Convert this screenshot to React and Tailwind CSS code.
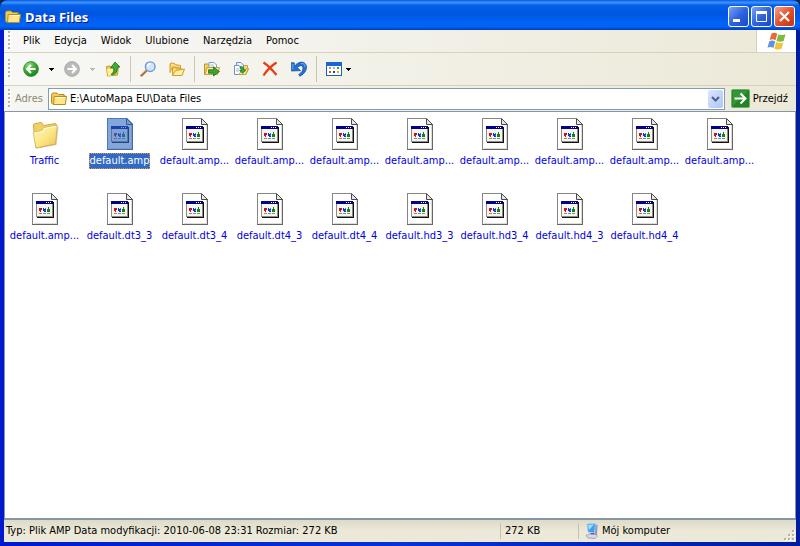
import React, { useState } from 'react';
import clsx from 'clsx';

const MENU = ['Plik', 'Edycja', 'Widok', 'Ulubione', 'Narzędzia', 'Pomoc'];

const FILES = [
  { id: 1, name: 'Traffic', folder: true },
  { id: 2, name: 'default.amp' },
  { id: 3, name: 'default.amp...' },
  { id: 4, name: 'default.amp...' },
  { id: 5, name: 'default.amp...' },
  { id: 6, name: 'default.amp...' },
  { id: 7, name: 'default.amp...' },
  { id: 8, name: 'default.amp...' },
  { id: 9, name: 'default.amp...' },
  { id: 10, name: 'default.amp...' },
  { id: 11, name: 'default.amp...' },
  { id: 12, name: 'default.dt3_3' },
  { id: 13, name: 'default.dt3_4' },
  { id: 14, name: 'default.dt4_3' },
  { id: 15, name: 'default.dt4_4' },
  { id: 16, name: 'default.hd3_3' },
  { id: 17, name: 'default.hd3_4' },
  { id: 18, name: 'default.hd4_3' },
  { id: 19, name: 'default.hd4_4' },
];

/* --- Icons --- */

const SmallFolder = () => (
  <svg viewBox="0 0 16 16" className="w-4 h-4 shrink-0">
    <path d="M.5 3.500 1.500 2H6l1.500 1.500H13V5h2l-1 8.500H2L.5 12z" fill="#f3cb55" stroke="#b98a1c" />
    <path d="M3.200 5.500H15.500L14.300 13.500H2.500z" fill="#ffe68c" stroke="#b98a1c" />
    <path d="M4 6.500h10.500" stroke="#fffbd8" />
  </svg>
);

const BigFolder = () => (
  <svg viewBox="0 0 28 32" className="w-7 h-8">
    <defs>
      <linearGradient id="bigFolder" x1="0" y1="0" x2="1" y2="1">
        <stop offset="0" stopColor="#fffab8" />
        <stop offset=".5" stopColor="#fbe88a" />
        <stop offset="1" stopColor="#f0c650" />
      </linearGradient>
    </defs>
    <path d="M6 30.500 25.500 27 27.500 9 24 9z" fill="#999" opacity=".45" />
    <path d="M2.300 7 3.500 5.500 10.500 4.500 12.500 7.500 24.500 5.500 25.500 7 24.500 26 5 30z" fill="#f2cf62" stroke="#c49a35" strokeWidth=".8" />
    <path d="M2.200 14.500 10.700 12.800 12.700 9.700 26.300 7.200 24.500 25.800 5 30z" fill="url(#bigFolder)" stroke="#d8b04a" strokeWidth=".8" />
    <path d="M3 15.200 11.200 13.500 13.200 10.500 25.300 8.300" stroke="#fffef0" fill="none" />
  </svg>
);

const FileIcon = ({ selected }) => (
  <svg viewBox="0 0 26 32" className="w-[26px] h-8" shapeRendering="crispEdges">
    <path d="M0 0h20l6 6v26H0z" fill="#fff" />
    <path d="M.5 31V.5H19" stroke="#858585" fill="none" />
    <path d="M0 31.500h25.500V6" stroke="#666" fill="none" />
    <path d="M1.500 30.500h23V7" stroke="#dddbd6" fill="none" />
    <path d="M20 0h6v6z" fill="#fff" />
    <path d="M19.500.5 25.500 6.500h-6z" fill="#e6e6e6" stroke="#4a4a4a" shapeRendering="auto" />
    <path d="M5 9h17v16H5z" fill="#111" />
    <path d="M4 8h17v16H4z" fill="#8e8e88" />
    <path d="M5 10h15v13H5z" fill="#f7f5ec" />
    <path d="M4 8h17v3H4z" fill="#00008b" />
    <path d="M14 9h1v1h-1zM16 9h1v1h-1zM18 9h1v1h-1z" fill="#fff" />
    <path d="M7 15h2v3H7zM8 18h1v1H8z" fill="#d01010" />
    <path d="M9 15h1v2H9z" fill="#7b1fa2" />
    <path d="M11 15h1v1h2v1h-1v1h1v1h-2v-1h-1z" fill="#1030d0" />
    <path d="M13 15h1v1h-1zM13 17h1v1h-1z" fill="#10a0c0" />
    <path d="M16 14h1v2h1v3h-3v-3h1z" fill="#108020" />
    <path d="M7 20h3v1H7zM11 20h3v1h-3zM15 20h3v1h-3z" fill="#8a8a8a" />
    {selected && <path d="M0 0h20l6 6v26H0z" fill="#316ac5" opacity=".6" />}
  </svg>
);

const RoundArrow = ({ disabled }) => (
  <svg viewBox="0 0 16 16" className="w-4 h-4">
    <defs>
      <radialGradient id="greenBall" cx=".35" cy=".25" r=".85">
        <stop offset="0" stopColor="#8fdc7c" />
        <stop offset=".55" stopColor="#36a52e" />
        <stop offset="1" stopColor="#117a12" />
      </radialGradient>
    </defs>
    <circle
      cx="8"
      cy="8"
      r="7.400"
      fill={disabled ? '#b9b9b9' : 'url(#greenBall)'}
      stroke={disabled ? '#a3a3a3' : '#2b8a24'}
      strokeWidth=".8"
    />
    {disabled ? (
      <path d="M3.500 8h8M8 4l4 4-4 4" stroke="#fff" strokeWidth="2" fill="none" />
    ) : (
      <path d="M12.500 8h-8M8 4 4 8l4 4" stroke="#fff" strokeWidth="2" fill="none" />
    )}
  </svg>
);

const Caret = () => (
  <svg viewBox="0 0 5 3" className="w-[5px] h-[3px]" shapeRendering="crispEdges">
    <path d="M0 0h5v1H4v1H3v1H2V2H1V1H0z" fill="currentColor" />
  </svg>
);

const UpIcon = () => (
  <svg viewBox="0 0 16 16" className="w-4 h-4">
    <path d="M1.500 5.500 5 5l1 1 7.500-1-1 9-10 1z" fill="#f3cd55" stroke="#c49a25" />
    <path d="M2 8l10-1v6.500L3 15z" fill="#ffec9c" />
    <path d="M6 14c3-1 4-3 3.800-7.500H12V14.500z" fill="#dca52b" opacity=".6" />
    <path d="M6 13.500c2.500-1.500 3-3.500 2.800-6.500H5.500l4.500-6 5 5h-2.700c.2 4-1.300 7-5.300 8z" fill="#3fae35" stroke="#14701a" strokeWidth=".8" />
  </svg>
);

const SearchIcon = () => (
  <svg viewBox="0 0 16 16" className="w-4 h-4">
    <path d="M1.500 14.500 6.500 9.500" stroke="#a5673f" strokeWidth="2.400" strokeLinecap="round" />
    <path d="M1.200 13.800 6 9.200" stroke="#e0aa86" strokeWidth=".8" />
    <circle cx="10.200" cy="5.700" r="4.800" fill="#cfe8fd" stroke="#7395d6" strokeWidth="1.400" />
    <path d="M7.500 5.300c.3-1.700 1.500-2.600 3-2.500" stroke="#fff" strokeWidth="1.500" fill="none" />
  </svg>
);

const FoldersIcon = () => (
  <svg viewBox="0 0 16 16" className="w-4 h-4">
    <path d="M1 11.500V3l1.200-1 3.300.5 1 1.200 5 .8v3" fill="#f9d978" stroke="#cf9d2c" />
    <path d="M1 11.500 3.500 6l8 1" fill="#fff0ae" stroke="#d7a63a" />
    <path d="M3.500 13.500V6.500l3.500.3 1 1 5.500.2v5.500z" fill="#fbdc7c" stroke="#cf9d2c" />
    <path d="M3.500 14.500 6.500 9.500 15.500 8l-2.500 6.500z" fill="#fff0a8" stroke="#cf9d2c" />
  </svg>
);

const MoveToIcon = () => (
  <svg viewBox="0 0 16 16" className="w-4 h-4">
    <path d="M.5 13.500V3h4l1 1h7v9.500z" fill="#f4cf60" stroke="#bd942f" />
    <path d="M5 1.500h5l2.500 2.500v5H5z" fill="#fff" stroke="#7c98c8" />
    <path d="M6.500 4h3M6.500 6h4" stroke="#94b4e4" />
    <path d="M1 13.500 3 6.500h12.500l-2 7z" fill="#ffeb9c" stroke="#cba035" />
    <path d="M4.500 8.800h5V6l6 4.500-6 4.500v-2.800h-5z" fill="#3ca532" stroke="#1b701c" strokeWidth=".8" />
  </svg>
);

const CopyToIcon = () => (
  <svg viewBox="0 0 16 16" className="w-4 h-4">
    <path d="M7 13.500V5l7.500-.5v3l1 .5-2.500 5.500z" fill="#f8dc80" stroke="#c9a13b" />
    <path d="M3.500 1.500H8L10.500 4v7h-7z" fill="#e7f0fd" stroke="#728fc3" />
    <path d="M1.500 4.500h4.500l2 2v7H1.500z" fill="#fff" stroke="#728fc3" />
    <path d="M3 8h3M3 10h3" stroke="#9dbbe8" />
    <path d="M6 13.500 9 9l6.500-1.500-3 6z" fill="#fff0a6" stroke="#c9a13b" />
    <path d="M7 5.500c3 0 4 1 4 3.500h2l-3.200 3.500L6.500 9.500h2C8.500 8 8 7.500 7 7.500z" fill="#40a638" stroke="#1c6d1f" strokeWidth=".6" />
  </svg>
);

const DeleteIcon = () => (
  <svg viewBox="0 0 16 16" className="w-4 h-4">
    <path d="M1.500 1.500c4 2.500 8.500 7 13 12.500M14.500 1.500C9 5 5 9 1.500 14.500" stroke="#ea3a12" strokeWidth="2.200" fill="none" />
  </svg>
);

const UndoIcon = () => (
  <svg viewBox="0 0 16 16" className="w-4 h-4">
    <path
      d="M.6 1.500 3.300 2v3.500C6 2 9.500.4 12.300 1.400c3.200 1.200 4 5 2.300 8.400-1.200 2.400-3 4.200-5.800 5.400l-1-1.700c2.400-1.600 4.200-3.600 4.200-6.200 0-3.200-3-3.600-5.700-.6L9.500 9.600.6 10z"
      fill="#2470d2"
      stroke="#1450a8"
      strokeWidth=".8"
    />
    <path d="M1.900 3v5.500M10 2.500c2.500-.5 4 1 3.800 3.500" stroke="#6cacf4" fill="none" />
  </svg>
);

const ViewsIcon = () => (
  <svg viewBox="0 0 16 16" className="w-4 h-4" shapeRendering="crispEdges">
    <path d="M.5 1.500h15v13H.5z" fill="#fff" stroke="#1a5fc4" />
    <path d="M0 1h16v4H0z" fill="#1b66d6" />
    <path d="M3 6h2v2H3z" fill="#9a9a9a" />
    <path d="M7 6h2v2H7z" fill="#a4b4d4" />
    <path d="M11 6h2v2h-2z" fill="#3aa040" />
    <path d="M3 10h2v2H3z" fill="#e85020" />
    <path d="M7 10h2v2H7z" fill="#2040a8" />
    <path d="M11 10h2v2h-2z" fill="#e8a820" />
  </svg>
);

const WindowsFlag = () => (
  <svg viewBox="0 0 20 18" className="w-5 h-[18px]">
    <path d="M4.500 1.500C6.500.3 8.500.4 10.300 1.700L8.500 8.200C6.700 7 4.700 7 2.600 8z" fill="#ea6a35" />
    <path d="M11.300 2.200c2 1.200 4.500 1.200 7.200 0L16.700 9c-2.500 1.200-5 1-7.200-.3z" fill="#7fba42" />
    <path d="M2.300 9.200C4.300 8.200 6.300 8.300 8.200 9.400L6.400 16C4.500 14.700 2.500 14.700.5 15.700z" fill="#5b94e0" />
    <path d="M9.200 10c2 1.300 4.700 1.400 7.200.2L14.600 16.800c-2.500 1.200-5 1-7.200-.4z" fill="#f5c33b" />
  </svg>
);

const ComputerIcon = () => (
  <svg viewBox="0 0 14 16" className="w-[14px] h-4">
    <path d="M10 1.500 12.500 2 12 12l-3 1z" fill="#9696b8" />
    <path d="M2 1 10.500.5 9.500 10 3 9z" fill="#3aa0ee" stroke="#b9c8e8" strokeWidth=".8" />
    <path d="M3 2 9 1.500 4 7z" fill="#9de0ff" />
    <path d="M5.500 10h3.500v2H5.500z" fill="#585884" />
    <path d="M1 12.500 4 11l7 .5 1.500 1.500-2.500 2.500-7-.5z" fill="#d8d8e8" stroke="#8a8aaa" strokeWidth=".7" />
  </svg>
);

/* --- Small layout pieces --- */

const Grip = () => (
  <svg viewBox="0 0 3 20" className="w-[3px] h-5 shrink-0" shapeRendering="crispEdges">
    {[0, 4, 8, 12, 16].map((y) => (
      <g key={y}>
        <path d={`M1 ${y + 1}h2v2h-2z`} fill="#fff" />
        <path d={`M0 ${y}h2v2h-2z`} fill="#b8b4a3" />
      </g>
    ))}
  </svg>
);

const Separator = () => <div className="w-px h-[26px] bg-[#c9c5b2] mx-[9px]" />;

const ToolButton = ({ label, children, className, disabled }) => (
  <button aria-label={label} disabled={disabled} className={clsx('flex items-center justify-center shrink-0', className)}>
    {children}
  </button>
);

const CaptionButton = ({ label, close, children }) => (
  <button
    aria-label={label}
    className={clsx(
      'w-[21px] h-[21px] rounded-[3px] border border-white flex items-center justify-center bg-linear-to-br',
      close ? 'from-[#f0a088] via-[#e2512a] to-[#c03510]' : 'from-[#7ba2f2] via-[#2f62e0] to-[#1c48c8]'
    )}
  >
    <svg viewBox="0 0 19 19" className="w-[19px] h-[19px]">
      {children}
    </svg>
  </button>
);

const App = () => {
  const [selectedId, setSelectedId] = useState(2);
  const [path, setPath] = useState('E:\\AutoMapa EU\\Data Files');

  return (
    <div className="bg-[#0a2a50]">
      <div className="min-h-screen flex flex-col rounded-t-lg bg-linear-to-r from-[#0019cf] via-[#0831d9] to-[#001da0] font-['DejaVu_Sans_Condensed','DejaVu_Sans',sans-serif] text-[11px] leading-4 text-black overflow-hidden">
        {/* Title bar */}
        <header className="h-[30px] flex items-center px-[5px] pt-[3px] bg-[linear-gradient(#0a5ae0_0%,#3c93ff_8%,#0561e8_18%,#0055e0_45%,#0062f5_75%,#0064fa_88%,#003ebc_100%)]">
          <SmallFolder />
          <h1 className="ml-1 flex-1 font-['Noto_Sans',sans-serif] text-[13px] font-bold text-white [text-shadow:1px_1px_0_#0a1883]">
            Data Files
          </h1>
          <div className="flex gap-[2px]">
            <CaptionButton label="Minimalizuj">
              <path d="M4 12h7v3H4z" fill="#fff" />
            </CaptionButton>
            <CaptionButton label="Maksymalizuj">
              <path d="M4.500 5h10v9.500h-10z" fill="none" stroke="#fff" />
              <path d="M4 4h11v3H4z" fill="#fff" />
            </CaptionButton>
            <CaptionButton label="Zamknij" close>
              <path d="m5 5 9 9M14 5l-9 9" stroke="#fff" strokeWidth="2.200" />
            </CaptionButton>
          </div>
        </header>

        <div className="flex-1 flex flex-col mx-1 mb-1 bg-[#ece9d8]">
          {/* Menu */}
          <div className="h-[23px] flex border-b border-[#d8d2bd] bg-linear-to-r from-[#f8f8f8] to-[#ece9d8]">
            <nav className="flex flex-1 items-center pl-1">
              <Grip />
              <div className="flex ml-[5px]">
                {MENU.map((item) => (
                  <button key={item} className="px-[7px]">
                    {item}
                  </button>
                ))}
              </div>
            </nav>
            <div className="w-10 flex items-center justify-center bg-white border-l border-[#d8d2bd]">
              <WindowsFlag />
            </div>
          </div>

          {/* Toolbar */}
          <div className="h-[33px] flex items-center pl-1 border-b border-[#d8d2bd] bg-linear-to-r from-[#f8f8f6] to-[#ece9d8]">
            <Grip />
            <ToolButton label="Wstecz" className="ml-3">
              <RoundArrow />
            </ToolButton>
            <ToolButton label="Historia wstecz" className="w-[25px] h-4">
              <Caret />
            </ToolButton>
            <ToolButton label="Dalej" disabled>
              <RoundArrow disabled />
            </ToolButton>
            <ToolButton label="Historia dalej" className="w-[25px] h-4 text-[#bdb9aa]" disabled>
              <Caret />
            </ToolButton>
            <ToolButton label="Do góry">
              <UpIcon />
            </ToolButton>
            <Separator />
            <ToolButton label="Wyszukaj">
              <SearchIcon />
            </ToolButton>
            <ToolButton label="Foldery" className="ml-[13px]">
              <FoldersIcon />
            </ToolButton>
            <Separator />
            <div className="flex gap-[13px]">
              <ToolButton label="Przenieś do">
                <MoveToIcon />
              </ToolButton>
              <ToolButton label="Kopiuj do">
                <CopyToIcon />
              </ToolButton>
              <ToolButton label="Usuń">
                <DeleteIcon />
              </ToolButton>
              <ToolButton label="Cofnij">
                <UndoIcon />
              </ToolButton>
            </div>
            <Separator />
            <ToolButton label="Widoki" className="gap-1">
              <ViewsIcon />
              <Caret />
            </ToolButton>
          </div>

          {/* Address bar */}
          <div className="h-[25px] flex items-center pl-1 pr-2 bg-linear-to-r from-[#f6f6f2] to-[#ece9d8]">
            <Grip />
            <label htmlFor="address" className="ml-1 text-[#8a8878]">
              Adres
            </label>
            <div className="ml-[5px] flex-1 h-[22px] flex items-center bg-white border border-[#7f9db9] pl-[2px] pr-px">
              <SmallFolder />
              <input
                id="address"
                value={path}
                onChange={(e) => setPath(e.target.value)}
                className="ml-[3px] flex-1 min-w-0 outline-none bg-transparent"
              />
              <button
                aria-label="Rozwiń adres"
                className="w-[15px] h-[18px] rounded-[2px] flex items-center justify-center bg-linear-to-br from-[#dbe6ff] to-[#aec5f5]"
              >
                <svg viewBox="0 0 9 6" className="w-[9px] h-[6px]">
                  <path d="m1 1 3.500 3.500L8 1" fill="none" stroke="#4d6185" strokeWidth="2" />
                </svg>
              </button>
            </div>
            <button className="ml-[6px] flex items-center gap-[3px]">
              <svg viewBox="0 0 19 19" className="w-[19px] h-[19px]">
                <rect x=".5" y=".5" width="18" height="18" rx="1.500" fill="#238326" stroke="#6bb068" />
                <path d="M1.500 1.500h16L1.500 17.500z" fill="#4eaa4c" opacity=".45" />
                <path d="M3.500 9.500H14M9.500 4.500l5 5-5 5" fill="none" stroke="#fff" strokeWidth="2" />
              </svg>
              Przejdź
            </button>
          </div>

          {/* Files */}
          <main className="flex-1 bg-white border-t border-x border-b-2 border-[#8596a8] pl-[2px] pt-[6px]">
            <ul className="flex flex-wrap">
              {FILES.map((file) => {
                const selected = file.id === selectedId;
                return (
                  <li key={file.id} className="w-[75px] h-[75px]">
                    <button
                      onClick={() => setSelectedId(file.id)}
                      className="w-full flex flex-col items-center gap-[3px]"
                    >
                      {file.folder ? <BigFolder /> : <FileIcon selected={selected} />}
                      <span
                        className={clsx(
                          'whitespace-nowrap border border-dotted leading-[14px]',
                          selected ? 'bg-[#316ac5] text-white border-[#e0963a]' : 'text-[#0000e0] border-transparent'
                        )}
                      >
                        {file.name}
                      </span>
                    </button>
                  </li>
                );
              })}
            </ul>
          </main>

          {/* Status bar */}
          <footer className="h-[22px] flex items-center bg-linear-to-b from-[#dedac8] via-[#ece9d8] to-[#ece9d8]">
            <div className="flex-1 pl-[2px]">Typ: Plik AMP Data modyfikacji: 2010-06-08 23:31 Rozmiar: 272 KB</div>
            <div className="w-[78px] border-l border-[#c5c2b0] pl-1">272 KB</div>
            <div className="w-[206px] border-l border-[#c5c2b0] pl-[6px] flex items-center gap-[3px]">
              <ComputerIcon />
              <span>Mój komputer</span>
            </div>
            <svg viewBox="0 0 12 12" className="w-3 h-3 self-end" shapeRendering="crispEdges">
              {[[8, 0], [4, 4], [8, 4], [0, 8], [4, 8], [8, 8]].map(([x, y]) => (
                <g key={`${x}-${y}`}>
                  <path d={`M${x + 1} ${y + 1}h2v2h-2z`} fill="#fff" />
                  <path d={`M${x} ${y}h2v2h-2z`} fill="#b8b4a3" />
                </g>
              ))}
            </svg>
          </footer>
        </div>
      </div>
    </div>
  );
};

export default App;
